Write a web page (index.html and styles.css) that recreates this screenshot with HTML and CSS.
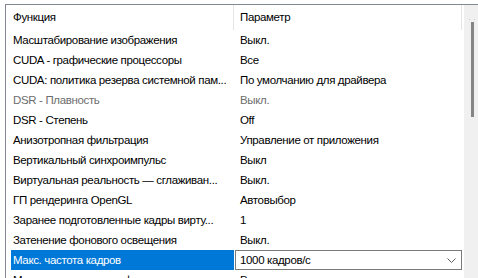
FILE: index.html
```html
<!DOCTYPE html>
<html lang="ru">
<head>
    <meta charset="UTF-8">
    <meta name="viewport" content="width=device-width, initial-scale=1.0">
    <title>Параметры 3D</title>
    <link rel="stylesheet" href="styles.css">
</head>
<body>
    <div class="frame">
        <div class="list">
            <div class="head">
                <div class="hcell first">Функция</div>
                <div class="hcell">Параметр</div>
            </div>

            <div class="rows">
                <div class="row"><span class="fn">Масштабирование изображения</span><span class="val">Выкл.</span></div>
                <div class="row"><span class="fn">CUDA - графические процессоры</span><span class="val">Все</span></div>
                <div class="row"><span class="fn">CUDA: политика резерва системной пам...</span><span class="val">По умолчанию для драйвера</span></div>
                <div class="row off"><span class="fn">DSR - Плавность</span><span class="val">Выкл.</span></div>
                <div class="row"><span class="fn">DSR - Степень</span><span class="val">Off</span></div>
                <div class="row"><span class="fn">Анизотропная фильтрация</span><span class="val">Управление от приложения</span></div>
                <div class="row"><span class="fn">Вертикальный синхроимпульс</span><span class="val">Выкл</span></div>
                <div class="row"><span class="fn">Виртуальная реальность — сглаживан...</span><span class="val">Выкл.</span></div>
                <div class="row"><span class="fn">ГП рендеринга OpenGL</span><span class="val">Автовыбор</span></div>
                <div class="row"><span class="fn">Заранее подготовленные кадры вирту...</span><span class="val">1</span></div>
                <div class="row"><span class="fn">Затенение фонового освещения</span><span class="val">Выкл.</span></div>
                <div class="row selected">
                    <span class="fn">Макс. частота кадров</span>
                    <div class="combo">
                        <span>1000 кадров/с</span>
                        <svg class="chev" width="9" height="5" viewBox="0 0 9 5"><path d="M0.5 0.5 L4.5 4.5 L8.5 0.5" fill="none" stroke="#606060" stroke-width="1"/></svg>
                    </div>
                </div>
                <div class="row"><span class="fn">Макс. частота кадров фонового при...</span><span class="val">Выкл.</span></div>
            </div>
        </div>

        <div class="scroll">
            <div class="arrow"></div>
            <div class="thumb"></div>
        </div>
    </div>
</body>
</html>
```

FILE: styles.css
```css
html, body{
    margin: 0;
    height: 100%;
    overflow: hidden;
    background: #fff;
}
body{
    font-family: "Liberation Sans", Arial, sans-serif;
    font-size: 11.5px;
    letter-spacing: -0.35px;
    color: #000;
}
.frame{
    display: flex;
    margin: 4px 0 0 5px;
    height: 274px;
    overflow: hidden;
    border-top: 1px solid #828790;
    border-left: 1px solid #828790;
}
.list{
    width: 458px;
    overflow: hidden;
}
.head{
    display: flex;
    height: 25px;
}
.hcell{
    width: 228px;
    padding-left: 6px;
    line-height: 25px;
    border-right: 1px solid #e5e5e5;
    box-sizing: border-box;
    white-space: nowrap;
}
.hcell.first{
    width: 228px;
    padding-left: 7px;
}
.rows{
    padding-left: 5px;
}
.row{
    display: flex;
    height: 20px;
    line-height: 20px;
    white-space: nowrap;
}
.fn{
    width: 223px;
    padding-left: 2px;
    box-sizing: border-box;
    overflow: hidden;
    text-overflow: ellipsis;
}
.val{
    padding-left: 6px;
}
.row.off{
    color: #6d6d6d;
}
.row.selected .fn{
    background: #0078d7;
    color: #fff;
}
.combo{
    display: flex;
    align-items: center;
    justify-content: space-between;
    margin-left: 1px;
    width: 227px;
    height: 20px;
    box-sizing: border-box;
    border: 1px solid #7a7a7a;
    padding: 0 5px 0 4px;
    line-height: 18px;
}
.chev{
    display: block;
}
.scroll{
    position: relative;
    width: 14px;
    margin-left: 2px;
    background: #f0f0f0;
}
.arrow{
    position: absolute;
    left: 5px;
    top: 14px;
    width: 4px;
    height: 1px;
    border-left: 1px solid #c8c8c8;
    border-right: 1px solid #c8c8c8;
}
.thumb{
    position: absolute;
    left: 7px;
    top: 17px;
    width: 3px;
    height: 95px;
    background: #858585;
}
```
